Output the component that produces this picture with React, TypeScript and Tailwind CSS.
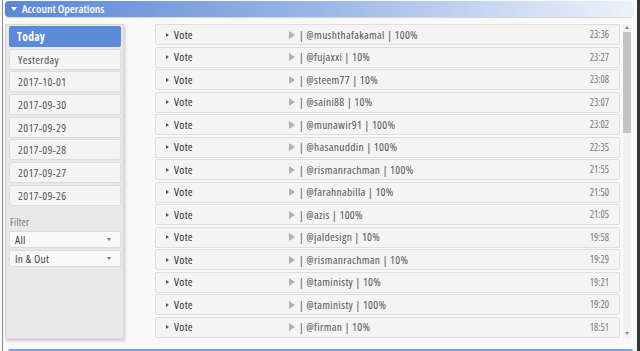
import React from "react";

const days = ["Yesterday", "2017-10-01", "2017-09-30", "2017-09-29", "2017-09-28", "2017-09-27", "2017-09-26"];

const ops = [
  { who: "@mushthafakamal", pct: "100%", time: "23:36" },
  { who: "@fujaxxi", pct: "10%", time: "23:27" },
  { who: "@steem77", pct: "10%", time: "23:08" },
  { who: "@saini88", pct: "10%", time: "23:07" },
  { who: "@munawir91", pct: "100%", time: "23:02" },
  { who: "@hasanuddin", pct: "100%", time: "22:35" },
  { who: "@rismanrachman", pct: "100%", time: "21:55" },
  { who: "@farahnabilla", pct: "10%", time: "21:50" },
  { who: "@azis", pct: "100%", time: "21:05" },
  { who: "@jaldesign", pct: "10%", time: "19:58" },
  { who: "@rismanrachman", pct: "10%", time: "19:29" },
  { who: "@taministy", pct: "10%", time: "19:21" },
  { who: "@taministy", pct: "100%", time: "19:20" },
  { who: "@firman", pct: "10%", time: "18:51" },
];

function Select({ label }: { label: string }) {
  return (
    <div className="h-[17px] flex items-center justify-between pl-[5px] pr-[9px] bg-[#f9f9f9] border border-[#dcdcdc] rounded-[2px] text-[#444]">
      <span>{label}</span>
      <span className="w-0 h-0 border-x-[2px] border-x-transparent border-t-[3px] border-t-[#777]" />
    </div>
  );
}

function OpRow({ who, pct, time }: { who: string; pct: string; time: string }) {
  return (
    <div className="h-[21px] flex items-center bg-[#f4f4f4] border border-[#dedede] rounded-[2px] pl-[10px] pr-[10px]">
      <span className="w-0 h-0 border-y-[2.5px] border-y-transparent border-l-[3px] border-l-[#555]" />
      <span className="ml-[5px] w-[115px] font-medium text-[#2e2e2e]">Vote</span>
      <span className="w-0 h-0 border-y-[4px] border-y-transparent border-l-[6px] border-l-[#b0b0b0]" />
      <span className="ml-[4px] text-[#555]">| {who} | {pct}</span>
      <span className="ml-auto text-[10px] tracking-normal text-[#777]">{time}</span>
    </div>
  );
}

export default function App() {
  return (
    <div className="flex w-[640px] h-[351px] overflow-hidden bg-[#f9f9f9] text-[11.5px] tracking-[0.3px] font-stretch-condensed [font-family:'Open_Sans',sans-serif]">
      <div className="w-[2px]" />
      <div className="w-[1px] bg-[#8c8c8c]" />
      <div className="flex-1 flex flex-col pl-[2px] pr-[4px]">
        {/* header */}
        <div className="mt-[1px] h-[16px] flex items-center rounded-[4px] bg-gradient-to-r from-[#5a86d6] via-[#9bb6e6] to-[#eef2fa] shadow-[0_1px_1px_rgba(0,0,0,0.15)]">
          <span className="ml-[6px] w-0 h-0 border-x-[3px] border-x-transparent border-t-[4px] border-t-white" />
          <span className="ml-[5px] text-white font-semibold tracking-normal">Account Operations</span>
        </div>

        <div className="flex mt-[7px]">
          {/* left panel */}
          <div className="w-[119px] h-[315px] bg-[#e8e8e8] border border-[#dadada] shadow-[1px_2px_3px_rgba(0,0,0,0.2)] pl-[3px] pr-[2px] pt-[1px] flex flex-col">
            <div className="flex flex-col gap-[1.7px]">
              <div className="h-[21px] flex items-center pl-[8px] bg-[#5b8ad8] rounded-[2px] text-white font-bold">Today</div>
              {days.map((d) => (
                <div key={d} className="h-[21px] flex items-center pl-[8px] bg-[#f4f4f4] border border-[#dcdcdc] rounded-[2px] text-[#555]">
                  {d}
                </div>
              ))}
            </div>
            <div className="mt-[9px] pl-[1px] text-[10px] text-[#777]">Filter</div>
            <div className="mt-[1px] flex flex-col gap-[2px]">
              <Select label="All" />
              <Select label="In & Out" />
            </div>
          </div>

          {/* operations list */}
          <div className="ml-[31px] w-[465px] flex flex-col gap-[1.5px]">
            {ops.map((o, i) => (
              <OpRow key={i} {...o} />
            ))}
          </div>

          {/* scrollbar */}
          <div className="ml-[3px] w-[8px] h-[315px] flex flex-col items-center bg-[#f1f1f1]">
            <span className="mt-[2px] w-0 h-0 border-x-[2px] border-x-transparent border-b-[3px] border-b-[#888]" />
            <div className="mt-[3px] w-[8px] h-[101px] bg-[#c3c3c3]" />
            <span className="mt-auto mb-[4px] w-0 h-0 border-x-[2px] border-x-transparent border-t-[3px] border-t-[#888]" />
          </div>
        </div>

        <div className="mt-[10px] ml-[3px] h-[3px] bg-[#7fa1de] rounded-t-[2px]" />
      </div>
      <div className="w-[3px] bg-[#353535]" />
    </div>
  );
}
